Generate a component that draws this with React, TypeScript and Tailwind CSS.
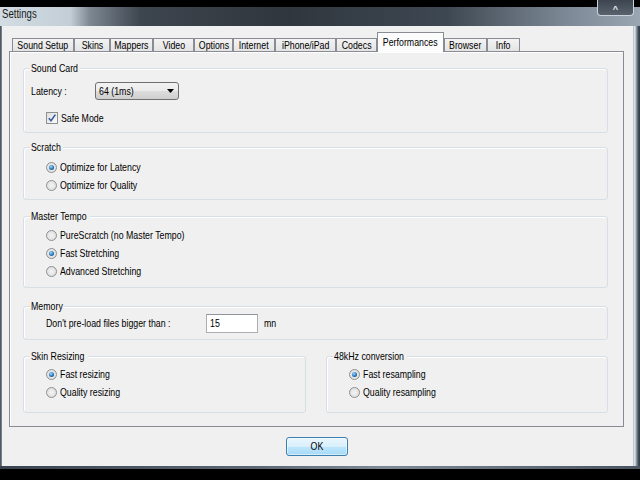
import React from "react";

const tabs = [
  { label: "Sound Setup", w: "w-[62px]" },
  { label: "Skins", w: "w-[36px]" },
  { label: "Mappers", w: "w-[43px]" },
  { label: "Video", w: "w-[41px]" },
  { label: "Options", w: "w-[39px]" },
  { label: "Internet", w: "w-[42px]" },
  { label: "iPhone/iPad", w: "w-[61px]" },
  { label: "Codecs", w: "w-[41px]" },
  { label: "Performances", w: "w-[67px]", active: true },
  { label: "Browser", w: "w-[43px]" },
  { label: "Info", w: "w-[33px]" },
];

// the dialog font is squeezed horizontally in the shot
function Txt({ children, center }: { children: React.ReactNode; center?: boolean }) {
  return (
    <span
      className={
        "inline-block whitespace-nowrap scale-x-[0.8] " + (center ? "origin-center" : "origin-left")
      }
    >
      {children}
    </span>
  );
}

function Radio({ label, checked }: { label: string; checked?: boolean }) {
  return (
    <div className="flex h-[18px] items-center">
      <span className="grid h-[11px] w-[11px] shrink-0 place-items-center rounded-full border border-[#8e8f8f] bg-[radial-gradient(circle_at_50%_50%,#f4f4f4,#d8d8d8)]">
        {checked && (
          <span className="h-[5px] w-[5px] rounded-full bg-[radial-gradient(circle_at_40%_35%,#9fdcff,#1c6cb0_60%,#0d3c6a)]" />
        )}
      </span>
      <span className="ml-[3px]">
        <Txt>{label}</Txt>
      </span>
    </div>
  );
}

function Group({
  title,
  titleW,
  className,
  children,
}: {
  title: string;
  titleW: string;
  className: string;
  children?: React.ReactNode;
}) {
  return (
    <div className={"relative rounded-[3px] border border-[#d5dfe5] shadow-[inset_1px_1px_0_#ffffff] " + className}>
      <span className={"absolute -top-[7px] left-[6px] flex overflow-visible bg-[#f0f0f0] pl-[1px] leading-[12px] " + titleW}>
        <Txt>{title}</Txt>
      </span>
      {children}
    </div>
  );
}

export default function App() {
  return (
    <div className="relative flex h-[480px] w-[640px] flex-col overflow-hidden bg-black font-['Liberation_Sans',Arial,sans-serif] text-[11px] text-black">
      <div className="h-[7px] shrink-0" />
      {/* title bar */}
      <div className="flex h-[19px] shrink-0 items-start bg-[linear-gradient(to_right,#d3dce3_0%,#c3ced6_11%,#7d8893_14%,#3d454e_22%,#2f363e_45%,#3e4852_70%,#7b8794_88%,#9aa6b2_100%)] pl-[2px]">
        <span className="mt-[1px] text-[12px] leading-[12px] text-[#1a1a1a]">
          <Txt>Settings</Txt>
        </span>
      </div>
      {/* close button peeking from the top */}
      <div className="absolute left-[597px] top-0 flex h-[16px] w-[37px] items-end justify-center rounded-b-[4px] border border-t-0 border-[#c9d1d9] bg-[linear-gradient(to_bottom,#3c4550,#59636e)] pb-[1px]">
        <span className="text-[9px] font-bold leading-[9px] text-[#e8ecef]">^</span>
      </div>

      <div className="flex h-[440px] shrink-0">
        <div className="w-[2px] bg-[linear-gradient(to_right,#3c4651,#8a96a2)]" />
        <div className="flex w-[631px] flex-col bg-[#f0f0f0] pl-[7px] pt-[6px]">
          {/* tabs */}
          <div className="flex h-[19px] items-end pl-[3px]">
            {tabs.map((t) =>
              t.active ? (
                <div
                  key={t.label}
                  className={t.w + " relative z-10 -mb-px flex h-[20px] items-start justify-center border border-b-0 border-[#898c95] bg-[#fcfcfc] pt-[3px] leading-[12px]"}
                >
                  <Txt center>{t.label}</Txt>
                </div>
              ) : (
                <div
                  key={t.label}
                  className={t.w + " flex h-[13px] items-center justify-center border border-b-0 border-[#898c95] bg-[linear-gradient(to_bottom,#f3f3f3,#e4e4e4)] leading-[12px]"}
                >
                  <Txt center>{t.label}</Txt>
                </div>
              )
            )}
          </div>

          {/* tab panel */}
          <div className="flex h-[376px] w-[615px] flex-col border border-[#898c95] bg-[#f0f0f0] pl-[13px] pt-[16px] shadow-[inset_1px_1px_0_#ffffff]">
            <Group title="Sound Card" titleW="w-[50px]" className="h-[65px] w-[585px] pl-[7px] pt-[13px]">
              <div className="flex h-[18px] items-center">
                <span className="w-[64px]">
                  <Txt>Latency :</Txt>
                </span>
                <div className="flex h-[18px] w-[84px] items-center justify-between rounded-[3px] border border-[#707070] bg-[linear-gradient(to_bottom,#f2f2f2_0%,#ebebeb_50%,#dddddd_51%,#cfcfcf_100%)] pl-[3px] pr-[4px]">
                  <Txt>64 (1ms)</Txt>
                  <svg width="7" height="4" viewBox="0 0 7 4">
                    <polygon points="0,0 7,0 3.5,4" fill="#000" />
                  </svg>
                </div>
              </div>
              <div className="mt-[12px] flex h-[12px] items-center pl-[15px]">
                <span className="grid h-[12px] w-[12px] place-items-center border border-[#8e8f8f] bg-[linear-gradient(135deg,#dedede,#fbfbfb)]">
                  <svg width="10" height="10" viewBox="0 0 10 10">
                    <path d="M1.8 5.2 L4 7.8 L8.4 1.6" fill="none" stroke="#3a5aa0" strokeWidth="1.6" />
                  </svg>
                </span>
                <span className="ml-[3px]">
                  <Txt>Safe Mode</Txt>
                </span>
              </div>
            </Group>

            <Group title="Scratch" titleW="w-[33px]" className="mt-[14px] h-[53px] w-[585px] pl-[22px] pt-[10px]">
              <Radio label="Optimize for Latency" checked />
              <Radio label="Optimize for Quality" />
            </Group>

            <Group title="Master Tempo" titleW="w-[60px]" className="mt-[16px] h-[72px] w-[585px] pl-[22px] pt-[9px]">
              <Radio label="PureScratch (no Master Tempo)" />
              <Radio label="Fast Stretching" checked />
              <Radio label="Advanced Stretching" />
            </Group>

            <Group title="Memory" titleW="w-[34px]" className="mt-[18px] h-[34px] w-[585px] pl-[22px] pt-[7px]">
              <div className="flex h-[19px] items-center">
                <span className="w-[160px]">
                  <Txt>Don't pre-load files bigger than :</Txt>
                </span>
                <div className="flex h-[19px] w-[52px] items-center border border-[#abadb3] border-t-[#8f939b] bg-white pl-[3px]">
                  <Txt>15</Txt>
                </div>
                <span className="ml-[6px]">
                  <Txt>mn</Txt>
                </span>
              </div>
            </Group>

            <div className="mt-[16px] flex gap-[20px]">
              <Group title="Skin Resizing" titleW="w-[58px]" className="h-[57px] w-[283px] pl-[22px] pt-[8px]">
                <Radio label="Fast resizing" checked />
                <Radio label="Quality resizing" />
              </Group>
              <Group title="48kHz conversion" titleW="w-[74px]" className="h-[57px] w-[282px] pl-[22px] pt-[8px]">
                <Radio label="Fast resampling" checked />
                <Radio label="Quality resampling" />
              </Group>
            </div>
          </div>

          {/* OK */}
          <div className="mt-[10px] flex pl-[277px]">
            <button className="h-[19px] w-[62px] rounded-[3px] border border-[#3c7fb1] bg-[linear-gradient(to_bottom,#eaf6fd_0%,#d9f0fc_50%,#bee6fd_51%,#a7d9f5_100%)] text-[11px] leading-[17px] shadow-[inset_0_0_0_1px_#ffffff80]">
              <Txt center>OK</Txt>
            </button>
          </div>
        </div>
        <div className="w-[7px] bg-[linear-gradient(to_right,#aeb9c4,#e3e9ee,#8896a4,#46515d,#2e3740)]" />
      </div>
      <div className="h-[3px] shrink-0 bg-[linear-gradient(to_right,#3a444f,#5c6773_40%,#7e8a96_60%,#4a5561)]" />
      <div className="flex-1" />
    </div>
  );
}
